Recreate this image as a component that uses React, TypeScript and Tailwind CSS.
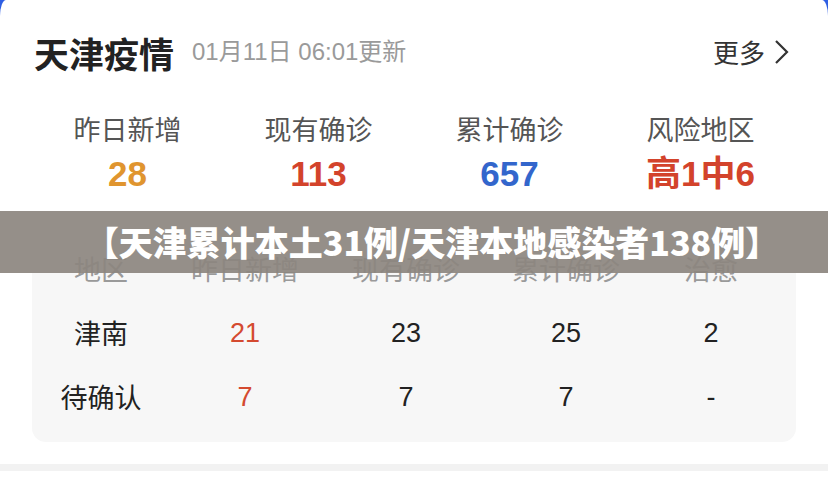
import React from "react";

const sans = {
  fontFamily: '"Liberation Sans", "Noto Sans CJK SC", sans-serif',
};
const cjk = {
  fontFamily: '"Noto Sans CJK SC", "Noto Sans", sans-serif',
};

const stats = [
  { label: "昨日新增", value: "28", color: "text-[#e0952f]" },
  { label: "现有确诊", value: "113", color: "text-[#d3432b]" },
  { label: "累计确诊", value: "657", color: "text-[#3366cc]" },
  { label: "风险地区", value: "高1中6", color: "text-[#d3432b]" },
];

const rows = [
  { area: "津南", add: "21", now: "23", total: "25", cured: "2" },
  { area: "待确认", add: "7", now: "7", total: "7", cured: "-" },
];

const cols = "grid grid-cols-[138px_150px_172px_148px_142px]";

export default function App() {
  return (
    <div className="relative w-[828px] h-[484px] overflow-hidden bg-[#2f5fe3]" style={sans}>
      <div className="flex flex-col w-full h-full bg-white rounded-tl-[6px_16px] rounded-tr-[6px_16px]">
        {/* header */}
        <div className="flex items-center justify-between mt-[27px] h-[50px] pl-[34px] pr-[38px]">
          <div className="flex items-center">
            <span className="text-[35px] font-bold text-[#222] leading-none" style={cjk}>
              天津疫情
            </span>
            <span className="ml-[18px] text-[24px] text-[#9a9a9a] leading-none">01月11日 06:01更新</span>
          </div>
          <div className="flex items-center text-[#333]">
            <span className="text-[26px] leading-none" style={cjk}>更多</span>
            <svg width="16" height="26" viewBox="0 0 16 26" className="ml-[9px]">
              <polyline points="2,2 13,13 2,24" fill="none" stroke="#333" strokeWidth="2.2" strokeLinejoin="miter" />
            </svg>
          </div>
        </div>

        {/* summary */}
        <div className="grid grid-cols-4 mx-[32px] mt-[37px]">
          {stats.map((s) => (
            <div key={s.label} className="flex flex-col items-center">
              <span className="text-[27px] leading-[30px] text-[#555]" style={cjk}>{s.label}</span>
              <span className={`mt-[10px] text-[35px] leading-[40px] font-bold ${s.color}`}>{s.value}</span>
            </div>
          ))}
        </div>

        {/* district table */}
        <div className="mx-[32px] mt-[27px] pt-[16px] pb-[13px] rounded-[14px] bg-[#f7f7f7]">
          <div className={`${cols} h-[64px] items-center text-[27px] text-[#9a9a9a]`} style={cjk}>
            <span className="text-center">地区</span>
            <span className="text-center">昨日新增</span>
            <span className="text-center">现有确诊</span>
            <span className="text-center">累计确诊</span>
            <span className="text-center">治愈</span>
          </div>
          {rows.map((r) => (
            <div key={r.area} className={`${cols} h-[64px] items-center text-[27px] text-[#222]`}>
              <span className="text-center" style={cjk}>{r.area}</span>
              <span className="text-center text-[#d44a30]">{r.add}</span>
              <span className="text-center">{r.now}</span>
              <span className="text-center">{r.total}</span>
              <span className="text-center">{r.cured}</span>
            </div>
          ))}
        </div>

        <div className="mt-[22px] h-[7px] bg-[#f2f2f2]" />
      </div>

      {/* caption strip */}
      <div className="absolute left-0 right-0 top-[211px] h-[62px] flex items-center justify-center pl-[36px] bg-[rgba(140,133,127,0.92)]">
        <span className="text-[34px] font-black text-white leading-none" style={cjk}>
          【天津累计本土31例/天津本地感染者138例】
        </span>
      </div>
    </div>
  );
}
